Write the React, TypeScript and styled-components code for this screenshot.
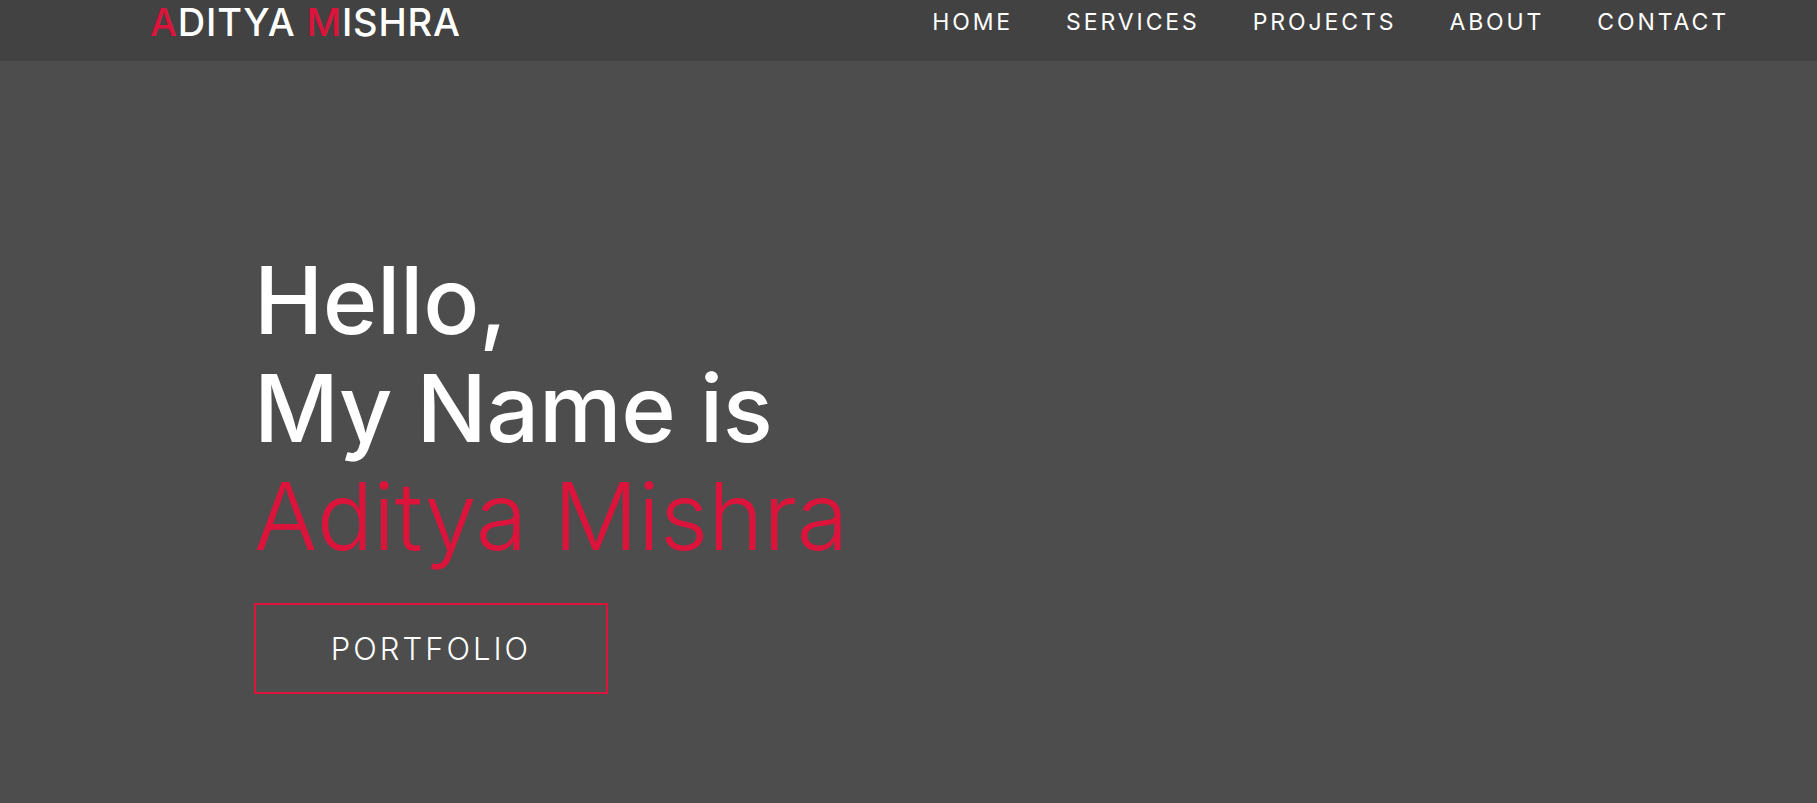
import React, { FC } from "react";
import styled, { createGlobalStyle } from "styled-components";

const accent = "#dc143c";

const GlobalStyle = createGlobalStyle`
  html, body {
    margin: 0;
    padding: 0;
    background: #4d4d4d;
    font-family: Inter, "Open Sans", sans-serif;
    color: #fff;
  }
`;

const Page = styled.div`
  min-height: 803px;
  background: #4d4d4d;
`;

const Header = styled.header`
  height: 61px;
  background: #424242;
  display: flex;
  align-items: flex-start;
  justify-content: space-between;
  padding: 0 88px 0 150px;
  box-sizing: border-box;
`;

const Logo = styled.div`
  font-size: 38px;
  font-weight: 500;
  line-height: 44px;
  letter-spacing: 0.8px;
  color: #fff;
`;

const Accent = styled.span`
  color: ${accent};
`;

const Nav = styled.nav`
  display: flex;
  gap: 53px;
  padding-top: 9px;
`;

const NavLink = styled.a`
  font-size: 23px;
  line-height: 27px;
  letter-spacing: 2.9px;
  color: #fff;
  text-decoration: none;
  text-transform: uppercase;
`;

const Hero = styled.section`
  padding: 185px 0 0 254px;
`;

const Title = styled.h1`
  margin: 0;
  font-size: 93px;
  font-weight: 500;
  line-height: 108px;
  letter-spacing: -0.4px;
`;

const Name = styled.span`
  display: block;
  color: ${accent};
  font-weight: 300;
  font-size: 94px;
  letter-spacing: -0.2px;
`;

const Button = styled.a`
  display: flex;
  align-items: center;
  justify-content: center;
  margin-top: 33px;
  width: 354px;
  height: 91px;
  box-sizing: border-box;
  border: 2px solid ${accent};
  color: #fff;
  font-size: 31px;
  font-weight: 300;
  letter-spacing: 3px;
  text-decoration: none;
`;

const links = ["Home", "Services", "Projects", "About", "Contact"];

const App: FC = () => (
  <Page>
    <GlobalStyle />
    <Header>
      <Logo>
        <Accent>A</Accent>DITYA <Accent>M</Accent>ISHRA
      </Logo>
      <Nav>
        {links.map((l) => (
          <NavLink key={l} href={`#${l.toLowerCase()}`}>
            {l}
          </NavLink>
        ))}
      </Nav>
    </Header>
    <Hero>
      <Title>
        Hello,
        <br />
        My Name is
        <Name>Aditya Mishra</Name>
      </Title>
      <Button href="#projects">PORTFOLIO</Button>
    </Hero>
  </Page>
);

export default App;
